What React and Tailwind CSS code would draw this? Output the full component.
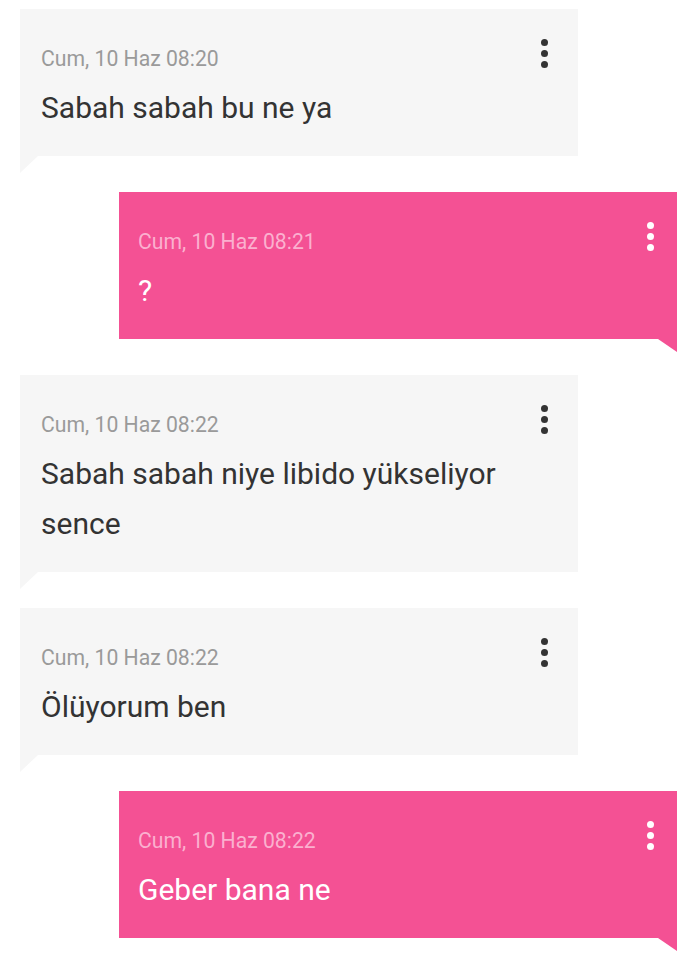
const messages = [
  { id: 1, mine: false, time: "Cum, 10 Haz 08:20", text: "Sabah sabah bu ne ya" },
  { id: 2, mine: true, time: "Cum, 10 Haz 08:21", text: "?" },
  { id: 3, mine: false, time: "Cum, 10 Haz 08:22", text: "Sabah sabah niye libido yükseliyor sence" },
  { id: 4, mine: false, time: "Cum, 10 Haz 08:22", text: "Ölüyorum ben" },
  { id: 5, mine: true, time: "Cum, 10 Haz 08:22", text: "Geber bana ne" },
];

function Dots({ mine }) {
  const dot = mine ? "bg-white" : "bg-[#333333]";
  return (
    <div className="flex flex-col items-center gap-[4px]">
      <span className={`block w-[7px] h-[7px] rounded-full ${dot}`} />
      <span className={`block w-[7px] h-[7px] rounded-full ${dot}`} />
      <span className={`block w-[7px] h-[7px] rounded-full ${dot}`} />
    </div>
  );
}

function Bubble({ msg }) {
  const { mine, time, text } = msg;
  return (
    <div
      className={`relative w-[558px] ${
        mine ? "ml-[119px] bg-[#f45194]" : "ml-[20px] bg-[#f6f6f6]"
      }`}
    >
      <div
        className={`flex justify-between pt-[30px] pb-[23px] ${
          mine ? "pl-[19px] pr-[23px]" : "pl-[21px] pr-[30px]"
        }`}
      >
        <div className="flex flex-col flex-1 min-w-0 pt-[8px]">
          <div
            className={`text-[21.2px] leading-[24px] ${
              mine ? "text-[#fbb0cf]" : "text-[#9a9a9a]"
            }`}
          >
            {time}
          </div>
          <div
            className={`mt-[12px] text-[30px] leading-[50px] ${
              mine ? "text-white" : "text-[#333333]"
            }`}
          >
            {text}
          </div>
        </div>
        <Dots mine={mine} />
      </div>
      {mine ? (
        <div className="absolute right-0 top-full w-[19px] h-[13px] bg-[#f45194] [clip-path:polygon(0_0,100%_0,100%_100%)]" />
      ) : (
        <div className="absolute left-0 top-full w-[18px] h-[17px] bg-[#f6f6f6] [clip-path:polygon(0_0,100%_0,0_100%)]" />
      )}
    </div>
  );
}

export default function App() {
  return (
    <div className="min-h-screen bg-white pt-[9px] font-['Roboto',sans-serif]">
      <div className="flex flex-col gap-[36px]">
        {messages.map((m) => (
          <Bubble key={m.id} msg={m} />
        ))}
      </div>
    </div>
  );
}
